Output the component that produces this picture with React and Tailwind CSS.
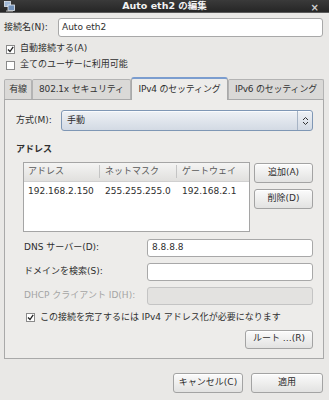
const font = { fontFamily: '"DejaVu Sans", "Noto Sans CJK JP", sans-serif' };

function Check({ checked }) {
  return (
    <span className="flex h-[9px] w-[9px] shrink-0 items-center justify-center border border-[#8a8a8a] bg-white">
      {checked && (
        <svg width="7" height="7" viewBox="0 0 7 7">
          <path d="M1 3.5 L3 5.5 L6.2 0.8" fill="none" stroke="#222" strokeWidth="1.3" />
        </svg>
      )}
    </span>
  );
}

function Btn({ children, className = '' }) {
  return (
    <div
      className={`flex items-center justify-center whitespace-nowrap rounded-[3px] border border-[#a3a3a3] bg-gradient-to-b from-[#fbfbfb] to-[#e2e2e1] text-[9px] text-[#2e2e2e] shadow-[inset_0_1px_0_#fff] ${className}`}
    >
      {children}
    </div>
  );
}

function Field({ label, value = '', disabled }) {
  return (
    <div className="flex items-center">
      <span className={`w-[142px] shrink-0 whitespace-nowrap pl-[19px] ${disabled ? 'text-[#a4a4a4]' : 'text-[#2e2e2e]'}`}>
        {label}
      </span>
      <div
        className={`flex h-[18px] flex-1 items-center rounded-[3px] border px-[4px] ${
          disabled ? 'border-[#c4c4c4] bg-[#e3e2e0]' : 'border-[#a8a8a8] bg-white'
        }`}
      >
        {value}
      </div>
    </div>
  );
}

export default function App() {
  const tabs = [
    { label: '有線', w: 'w-[28px]' },
    { label: '802.1x セキュリティ', w: 'w-[99px]' },
    { label: 'IPv4 のセッティング', w: 'w-[97px]', active: true },
    { label: 'IPv6 のセッティング', w: 'w-[96px]' },
  ];

  return (
    <div className="h-[400px] w-[329px] overflow-hidden bg-[#e9e8e6] text-[9px] text-[#2e2e2e]" style={font}>
      {/* Title bar */}
      <div className="relative flex h-[13px] items-center justify-center border-b border-[#5a5a5a] bg-gradient-to-b from-[#3a3a3a] to-[#262626]">
        <svg className="absolute left-[4px] top-[1px]" width="11" height="11" viewBox="0 0 11 11">
          <rect x="0.5" y="0.5" width="6" height="5" fill="#9fb7d4" stroke="#dfe7f0" strokeWidth="0.8" />
          <rect x="4" y="4" width="6.5" height="5.5" fill="#6f8fb8" stroke="#e8eef5" strokeWidth="0.8" />
          <rect x="2" y="9.5" width="7" height="1" fill="#bbb" />
        </svg>
        <span className="text-[9.5px] font-bold text-[#f2f2f2]">Auto eth2 の編集</span>
        <span className="absolute right-[10px] top-[0px] text-[10px] font-bold text-[#cfcfcf]">×</span>
      </div>

      <div className="px-[4px]">
        {/* Connection name */}
        <div className="mt-[5px] flex h-[19px] items-center">
          <span className="w-[54px] whitespace-nowrap">接続名(N):</span>
          <div className="mr-[2px] flex h-[19px] flex-1 items-center rounded-[3px] border border-[#a8a8a8] bg-white pl-[3px]">
            Auto eth2
          </div>
        </div>

        <div className="mt-[4px] flex h-[16px] items-center gap-[5px] pl-[2px]">
          <Check checked />
          <span>自動接続する(A)</span>
        </div>
        <div className="flex h-[16px] items-center gap-[5px] pl-[2px]">
          <Check />
          <span>全てのユーザーに利用可能</span>
        </div>

        {/* Tabs */}
        <div className="mt-[3px] flex h-[23px] items-end">
          {tabs.map((t) =>
            t.active ? (
              <div
                key={t.label}
                className={`${t.w} relative z-10 -mb-px flex h-[23px] items-center justify-center overflow-hidden whitespace-nowrap rounded-t-[3px] border border-b-0 border-t-2 border-[#a9a9a9] border-t-[#7b9dcf] bg-[#edecea] text-[9px] tracking-[-0.2px]`}
              >
                {t.label}
              </div>
            ) : (
              <div
                key={t.label}
                className={`${t.w} flex h-[20px] items-center justify-center overflow-hidden whitespace-nowrap rounded-t-[2px] border border-b-0 border-[#b3b3b3] bg-[#dad9d7] tracking-[-0.2px] text-[#333]`}
              >
                {t.label}
              </div>
            )
          )}
        </div>

        {/* Panel */}
        <div className="mr-[1px] border border-[#a9a9a9] bg-[#edecea] pb-[9px]">
          <div className="flex items-center pl-[11px] pr-[10px] pt-[10px]">
            <span className="w-[45px] whitespace-nowrap">方式(M):</span>
            <div className="flex h-[21px] flex-1 items-center rounded-[3px] border border-[#7f97b5] bg-gradient-to-b from-[#eef1f5] to-[#d3dae4] shadow-[inset_0_1px_0_#fafbfd]">
              <span className="flex-1 pl-[5px]">手動</span>
              <div className="flex h-[19px] w-[15px] items-center justify-center border-l border-[#a7b4c5]">
                <svg width="7" height="10" viewBox="0 0 7 10">
                  <path d="M1 4 L3.5 1.5 L6 4 M1 6 L3.5 8.5 L6 6" fill="none" stroke="#333" strokeWidth="1" />
                </svg>
              </div>
            </div>
          </div>

          <div className="mt-[12px] pl-[11px] font-bold">アドレス</div>

          <div className="mt-[5px] flex pl-[18px] pr-[10px]">
            <div className="h-[70px] w-[227px] border border-[#a5a5a5] bg-white">
              <div className="flex h-[19px] items-center border-b border-[#d0d0d0] bg-gradient-to-b from-[#f4f4f3] to-[#e1e0de] text-[#5a5a5a]">
                <span className="w-[76px] border-r border-[#c4c4c4] pl-[4px]">アドレス</span>
                <span className="w-[77px] border-r border-[#c4c4c4] pl-[5px]">ネットマスク</span>
                <span className="pl-[5px]">ゲートウェイ</span>
              </div>
              <div className="mt-[3px] flex">
                <span className="w-[76px] pl-[4px]">192.168.2.150</span>
                <span className="w-[77px] pl-[5px]">255.255.255.0</span>
                <span className="pl-[5px]">192.168.2.1</span>
              </div>
            </div>
            <div className="ml-[4px] flex flex-1 flex-col gap-[6px] pt-[1px]">
              <Btn className="h-[20px]">追加(A)</Btn>
              <Btn className="h-[20px]">削除(D)</Btn>
            </div>
          </div>

          <div className="mt-[7px] flex flex-col gap-[6px] pr-[10px]">
            <Field label="DNS サーバー(D):" value="8.8.8.8" />
            <Field label="ドメインを検索(S):" />
            <Field label="DHCP クライアント ID(H):" disabled />
          </div>

          <div className="mt-[6px] flex h-[14px] items-center gap-[5px] whitespace-nowrap pl-[21px]">
            <Check checked />
            <span>この接続を完了するには IPv4 アドレス化が必要になります</span>
          </div>

          <div className="mt-[5px] flex justify-end pr-[10px]">
            <Btn className="h-[19px] w-[68px]">ルート …(R)</Btn>
          </div>
        </div>

        {/* Dialog buttons */}
        <div className="mt-[14px] flex justify-end gap-[8px] pr-[2px]">
          <Btn className="h-[20px] w-[70px]">キャンセル(C)</Btn>
          <Btn className="h-[20px] w-[72px]">適用</Btn>
        </div>
      </div>
    </div>
  );
}
